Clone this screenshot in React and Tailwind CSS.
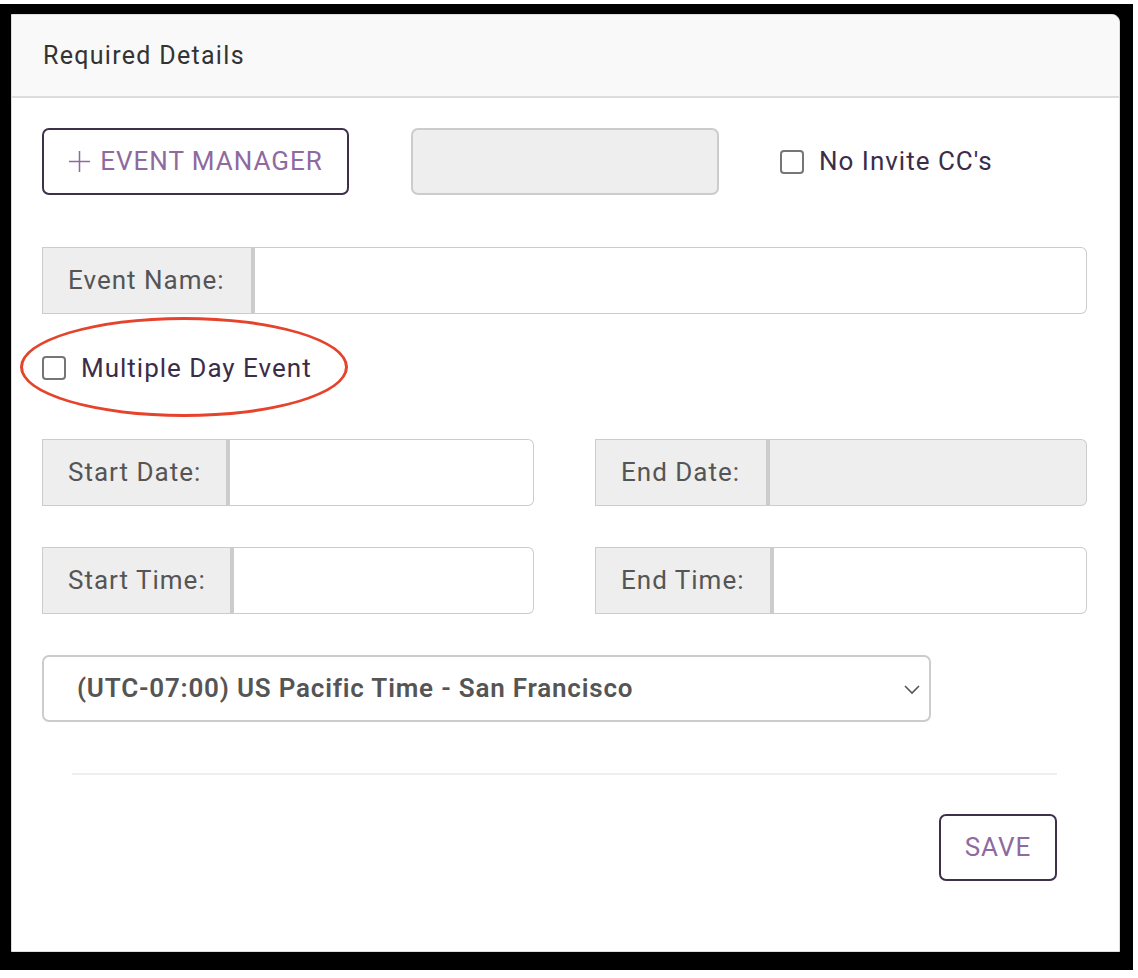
import React from 'react';

const InputGroup = ({ label, labelW, disabled }) => (
    <div className="flex h-[67px] w-full">
        <div className={`flex items-center shrink-0 bg-[#eeeeee] border border-[#cccccc] pl-[25px] text-[26px] tracking-[1px] text-[#555555] ${labelW}`}>
            {label}
        </div>
        <div className={`flex-1 border border-l-[3px] border-[#cccccc] rounded-r-[6px] ${disabled ? 'bg-[#eeeeee]' : 'bg-white'}`}></div>
    </div>
);

const Checkbox = ({ label }) => (
    <label className="flex items-center gap-[15px] text-[26px] tracking-[1px] text-[#3b2d4a]">
        <span className="w-[24px] h-[24px] rounded-[4px] border-2 border-[#767676] bg-white"></span>
        {label}
    </label>
);

const App = () => {
    return (
        <div className="w-[1138px] h-[978px] bg-white pt-[4px]" style={{ fontFamily: 'Roboto, "Liberation Sans", sans-serif' }}>
            <div className="w-[1133px] h-[966px] bg-black pl-[11px] pt-[10px] pr-[13px] pb-[18px]">
                <div className="w-full h-full bg-white border border-[#dddddd] rounded-tr-[8px] flex flex-col">
                    {/* Header */}
                    <div className="h-[83px] shrink-0 bg-[#f9f9f9] border-b-2 border-[#dddddd] rounded-tr-[8px] flex items-center pl-[31px] text-[25px] tracking-[1.3px] text-[#333333]">
                        Required Details
                    </div>

                    {/* Body */}
                    <div className="pt-[30px] pl-[30px] pr-[32px] flex flex-col">
                        <div className="flex items-center h-[67px]">
                            <button className="w-[307px] h-[67px] rounded-[7px] border-2 border-[#3e3049] text-[#8e6aa0] text-[26px] tracking-[1px] flex items-center justify-center gap-[9px]">
                                <svg width="23" height="23" viewBox="0 0 24 24" fill="none" stroke="currentColor" strokeWidth="1.6">
                                    <path d="M12 1v22M1 12h22" />
                                </svg>
                                EVENT MANAGER
                            </button>
                            <div className="ml-[62px] w-[308px] h-[67px] rounded-[7px] bg-[#eeeeee] border-2 border-[#cccccc]"></div>
                            <div className="ml-[61px]">
                                <Checkbox label="No Invite CC's" />
                            </div>
                        </div>

                        <div className="mt-[52px]">
                            <InputGroup label="Event Name:" labelW="w-[210px]" />
                        </div>

                        <div className="mt-[42px] h-[24px] flex items-center">
                            <div className="relative">
                                <Checkbox label="Multiple Day Event" />
                                <div className="absolute left-[-22px] top-[-32px] w-[328px] h-[100px] rounded-[50%] border-[3px] border-[#e5432b]"></div>
                            </div>
                        </div>

                        <div className="mt-[59px] grid grid-cols-2 gap-x-[61px] gap-y-[41px]">
                            <InputGroup label="Start Date:" labelW="w-[185px]" />
                            <InputGroup label="End Date:" labelW="w-[172px]" disabled />
                            <InputGroup label="Start Time:" labelW="w-[189px]" />
                            <InputGroup label="End Time:" labelW="w-[176px]" />
                        </div>

                        <div className="mt-[41px] w-[889px] h-[67px] rounded-[7px] border-2 border-[#cccccc] flex items-center justify-between pl-[33px] pr-[8px]">
                            <span className="text-[26px] font-semibold tracking-[0.8px] text-[#555555]">(UTC-07:00) US Pacific Time - San Francisco</span>
                            <svg width="18" height="12" viewBox="0 0 18 12" fill="none" stroke="#555555" strokeWidth="1.6">
                                <path d="M2 3l7 7 7-7" />
                            </svg>
                        </div>

                        <div className="mt-[51px] mx-[30px] h-[2px] bg-[#eeeeee]"></div>

                        <div className="mt-[39px] flex justify-end pr-[30px]">
                            <button className="w-[118px] h-[67px] rounded-[7px] border-2 border-[#3e3049] text-[#8e6aa0] text-[26px] tracking-[1px]">
                                SAVE
                            </button>
                        </div>
                    </div>
                </div>
            </div>
        </div>
    );
};

export default App;
